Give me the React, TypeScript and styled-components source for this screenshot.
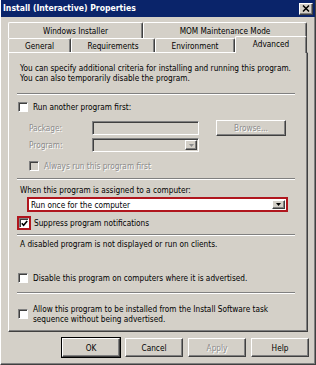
import React from "react";
import styled, { createGlobalStyle, css } from "styled-components";

const FONT = `"DejaVu Sans Condensed", "Liberation Sans", sans-serif`;
const FACE = "#d4d0c8";
const SHADOW = "#808080";
const DARK = "#404040";
const RED = "#b0161e";

const Global = createGlobalStyle`
  html, body { margin: 0; padding: 0; background: ${FACE}; }
  body { font-family: ${FONT}; font-size: 8.2px; color: #000; }
  * { box-sizing: border-box; }
`;

const Window = styled.div`
  width: 316px;
  height: 365px;
  background: ${FACE};
  display: flex;
  flex-direction: column;
  border-left: 1px solid #fff;
  border-right: 1px solid ${DARK};
  border-bottom: 1px solid ${DARK};
  box-shadow: inset -1px -1px 0 ${SHADOW};
  overflow: hidden;
`;

const TitleBar = styled.div`
  height: 17px;
  margin-left: -1px;
  margin-right: -1px;
  background: #0a246a;
  display: flex;
  align-items: center;
  justify-content: space-between;
  padding: 0 3px 0 3px;
`;

const Title = styled.span`
  color: #fff;
  font-weight: bold;
  font-size: 8.6px;
  line-height: 17px;
`;

const raised = css`
  border-top: 1px solid #fff;
  border-left: 1px solid #fff;
  border-right: 1px solid ${DARK};
  border-bottom: 1px solid ${DARK};
  box-shadow: inset -1px -1px 0 ${SHADOW};
  background: ${FACE};
`;

const sunken = css`
  border-top: 1px solid ${SHADOW};
  border-left: 1px solid ${SHADOW};
  border-right: 1px solid #fff;
  border-bottom: 1px solid #fff;
  box-shadow: inset 1px 1px 0 ${DARK};
`;

const CloseButton = styled.div`
  ${raised};
  width: 14px;
  height: 12px;
  display: flex;
  align-items: center;
  justify-content: center;
`;

const TabArea = styled.div`
  margin-top: 5px;
  padding-left: 7px;
  display: flex;
  flex-direction: column;
`;

const TabRow = styled.div<{ $h: number }>`
  display: flex;
  align-items: flex-end;
  height: ${(p) => p.$h}px;
`;

const Tab = styled.div<{ $w: number; $selected?: boolean; $back?: boolean }>`
  position: relative;
  width: ${(p) => p.$w}px;
  height: ${(p) => (p.$selected ? 17 : p.$back ? 16 : 14)}px;
  margin-bottom: ${(p) => (p.$selected ? -1 : 0)}px;
  z-index: ${(p) => (p.$selected ? 2 : 1)};
  background: ${FACE};
  border-top: 1px solid #fff;
  border-left: 1px solid #fff;
  border-right: 1px solid ${DARK};
  border-radius: 2px 2px 0 0;
  box-shadow: inset -1px 0 0 ${SHADOW};
  display: flex;
  align-items: ${(p) => (p.$selected ? "flex-start" : "center")};
  padding-top: ${(p) => (p.$selected ? 2 : 0)}px;
  justify-content: center;
  line-height: 10px;
`;

const Panel = styled.div`
  width: 300px;
  height: 280px;
  margin-left: 7px;
  ${raised};
  display: flex;
  flex-direction: column;
  padding-left: 0;
`;

const Text = styled.div<{ $mt: number; $ml: number }>`
  margin-top: ${(p) => p.$mt}px;
  margin-left: ${(p) => p.$ml}px;
  line-height: 10px;
  white-space: nowrap;
`;

const Separator = styled.div<{ $mt: number }>`
  margin-top: ${(p) => p.$mt}px;
  margin-left: 8px;
  width: 278px;
  height: 2px;
  border-top: 1px solid ${SHADOW};
  border-bottom: 1px solid #fff;
`;

const Row = styled.div<{ $mt: number; $ml: number; $h: number; $top?: boolean }>`
  margin-top: ${(p) => p.$mt}px;
  margin-left: ${(p) => p.$ml}px;
  height: ${(p) => p.$h}px;
  display: flex;
  align-items: ${(p) => (p.$top ? "flex-start" : "center")};
`;

const BoxWrap = styled.div<{ $disabled?: boolean }>`
  width: 10px;
  height: 10px;
  flex: none;
  ${sunken};
  background: ${(p) => (p.$disabled ? FACE : "#fff")};
  display: flex;
  align-items: center;
  justify-content: center;
`;

const CheckLabel = styled.span<{ $disabled?: boolean; $gap?: number }>`
  margin-left: ${(p) => p.$gap ?? 5}px;
  line-height: 10px;
  white-space: nowrap;
  color: ${(p) => (p.$disabled ? "#8c8c8c" : "#000")};
  text-shadow: ${(p) => (p.$disabled ? "1px 1px 0 #fff" : "none")};
`;

const Checkbox: React.FC<{ checked?: boolean; disabled?: boolean }> = ({ checked, disabled }) => (
  <BoxWrap $disabled={disabled}>
    {checked && (
      <svg width="7" height="7" viewBox="0 0 7 7">
        <path d="M0.8 3.2 L2.6 5.2 L6.2 1" fill="none" stroke="#000" strokeWidth="1.6" />
      </svg>
    )}
  </BoxWrap>
);

const FieldLabel = styled.span`
  width: 63px;
  flex: none;
  color: #8c8c8c;
  text-shadow: 1px 1px 0 #fff;
  line-height: 10px;
`;

const Field = styled.div<{ $w: number }>`
  width: ${(p) => p.$w}px;
  height: 14px;
  ${sunken};
  background: ${FACE};
  display: flex;
  justify-content: flex-end;
  align-items: center;
  padding-right: 1px;
`;

const DropButton = styled.div<{ $w: number; $h: number }>`
  width: ${(p) => p.$w}px;
  height: ${(p) => p.$h}px;
  ${raised};
  display: flex;
  align-items: center;
  justify-content: center;
`;

const Arrow: React.FC<{ color: string }> = ({ color }) => (
  <svg width="5" height="3" viewBox="0 0 5 3">
    <path d="M0 0 H5 L2.5 3 Z" fill={color} />
  </svg>
);

const SmallButton = styled.div<{ $disabled?: boolean }>`
  margin-left: 17px;
  width: 70px;
  height: 16px;
  ${raised};
  display: flex;
  align-items: center;
  justify-content: center;
  color: #8c8c8c;
  text-shadow: 1px 1px 0 #fff;
`;

const Highlight = styled.div<{ $mt: number; $ml: number; $w: number; $h: number }>`
  margin-top: ${(p) => p.$mt}px;
  margin-left: ${(p) => p.$ml}px;
  width: ${(p) => p.$w}px;
  height: ${(p) => p.$h}px;
  border: 2px solid ${RED};
  display: flex;
  align-items: center;
  justify-content: center;
  flex: none;
`;

const Combo = styled.div`
  flex: 1;
  height: 100%;
  background: #fff;
  display: flex;
  align-items: center;
  justify-content: space-between;
  padding-left: 2px;
  padding-right: 1px;
  line-height: 10px;
`;

const ButtonBar = styled.div`
  margin-top: 6px;
  display: flex;
  justify-content: flex-end;
  gap: 5px;
  padding-right: 6px;
`;

const DialogButton = styled.div<{ $default?: boolean; $disabled?: boolean }>`
  width: 58px;
  height: 19px;
  ${raised};
  display: flex;
  align-items: center;
  justify-content: center;
  color: ${(p) => (p.$disabled ? "#8c8c8c" : "#000")};
  text-shadow: ${(p) => (p.$disabled ? "1px 1px 0 #fff" : "none")};
  ${(p) =>
    p.$default &&
    css`
      outline: 1px solid #000;
    `}
`;

export default function App() {
  return (
    <>
      <Global />
      <Window>
        <TitleBar>
          <Title>Install (Interactive) Properties</Title>
          <CloseButton>
            <svg width="8" height="7" viewBox="0 0 8 7">
              <path d="M1 0.5 L7 6.5 M7 0.5 L1 6.5" stroke="#000" strokeWidth="1.5" />
            </svg>
          </CloseButton>
        </TitleBar>
        <TabArea>
          <TabRow $h={16}>
            <Tab $w={135} $back>Windows Installer</Tab>
            <Tab $w={164} $back>MOM Maintenance Mode</Tab>
          </TabRow>
          <TabRow $h={14}>
            <Tab $w={63}>General</Tab>
            <Tab $w={84}>Requirements</Tab>
            <Tab $w={80}>Environment</Tab>
            <Tab $w={72} $selected>Advanced</Tab>
          </TabRow>
        </TabArea>
        <Panel>
          <Text $mt={10} $ml={11}>
            You can specify additional criteria for installing and running this program.
            <br />
            You can also temporarily disable the program.
          </Text>
          <Separator $mt={10} />
          <Row $mt={5} $ml={9} $h={13}>
            <Checkbox />
            <CheckLabel>Run another program first:</CheckLabel>
          </Row>
          <Row $mt={7} $ml={20} $h={16}>
            <FieldLabel>Package:</FieldLabel>
            <Field $w={107} />
            <SmallButton>Browse...</SmallButton>
          </Row>
          <Row $mt={2} $ml={20} $h={14}>
            <FieldLabel>Program:</FieldLabel>
            <Field $w={107}>
              <DropButton $w={12} $h={10}>
                <Arrow color="#8c8c8c" />
              </DropButton>
            </Field>
          </Row>
          <Row $mt={8} $ml={20} $h={12}>
            <Checkbox disabled />
            <CheckLabel $disabled>Always run this program first</CheckLabel>
          </Row>
          <Separator $mt={6} />
          <Text $mt={5} $ml={11}>When this program is assigned to a computer:</Text>
          <Highlight $mt={2} $ml={18} $w={261} $h={15}>
            <Combo>
              <span>Run once for the computer</span>
              <DropButton $w={13} $h={9}>
                <Arrow color="#000" />
              </DropButton>
            </Combo>
          </Highlight>
          <Row $mt={4} $ml={8} $h={14}>
            <Highlight $mt={0} $ml={0} $w={14} $h={14}>
              <Checkbox checked />
            </Highlight>
            <CheckLabel $gap={3}>Suppress program notifications</CheckLabel>
          </Row>
          <Separator $mt={4} />
          <Text $mt={3} $ml={11}>A disabled program is not displayed or run on clients.</Text>
          <Row $mt={22} $ml={9} $h={13}>
            <Checkbox />
            <CheckLabel>Disable this program on computers where it is advertised.</CheckLabel>
          </Row>
          <Separator $mt={8} />
          <Row $mt={10} $ml={9} $h={20}>
            <Checkbox />
            <CheckLabel>
              Allow this program to be installed from the Install Software task
              <br />
              sequence without being advertised.
            </CheckLabel>
          </Row>
        </Panel>
        <ButtonBar>
          <DialogButton $default>OK</DialogButton>
          <DialogButton>Cancel</DialogButton>
          <DialogButton $disabled>Apply</DialogButton>
          <DialogButton>Help</DialogButton>
        </ButtonBar>
      </Window>
    </>
  );
}
